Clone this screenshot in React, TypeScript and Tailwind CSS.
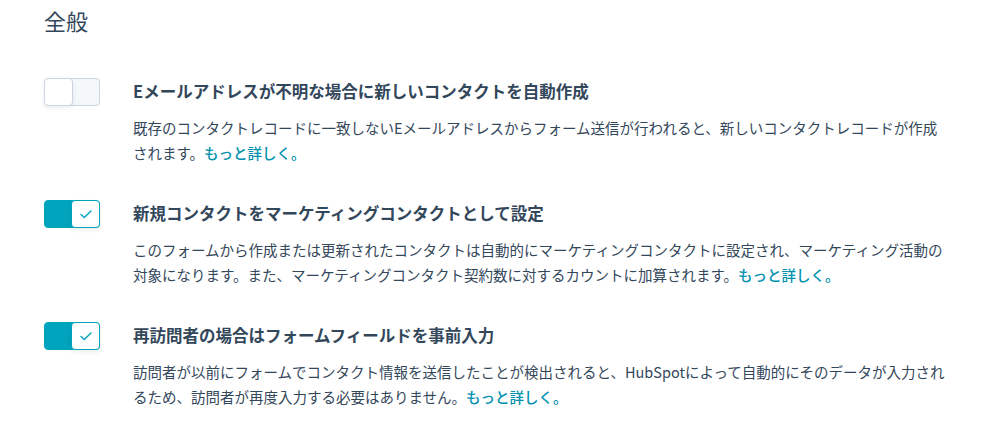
import React, { useState } from "react";

const FONT = { fontFamily: '"Noto Sans CJK JP", "Noto Sans", sans-serif' };

interface SettingProps {
  title: string;
  lines: string[];
  enabled: boolean;
}

const Toggle: React.FC<{ on: boolean; onClick: () => void }> = ({ on, onClick }) => (
  <button
    type="button"
    onClick={onClick}
    className={`relative flex h-[28px] w-[56px] shrink-0 rounded-[4px] border ${
      on ? "border-[#00a4bd] bg-[#00a4bd]" : "border-[#cbd6e2] bg-[#f5f8fa]"
    }`}
  >
    <span
      className={`absolute top-[-1px] flex h-[28px] w-[29px] items-center justify-center rounded-[4px] border bg-white shadow-[0_2px_5px_rgba(0,0,0,0.07)] ${
        on ? "left-[26px] border-[#00a4bd]" : "left-[-1px] border-[#cbd6e2]"
      }`}
    >
      {on && (
        <svg width="12" height="9" viewBox="0 0 12 9" fill="none">
          <path d="M1 4.5 L4.3 7.6 L11 1" stroke="#00a4bd" strokeWidth="1.4" strokeLinecap="round" strokeLinejoin="round" />
        </svg>
      )}
    </span>
  </button>
);

const Setting: React.FC<SettingProps> = ({ title, lines, enabled }) => {
  const [on, setOn] = useState(enabled);
  return (
    <div className="flex">
      <div className="mt-[-1px]">
        <Toggle on={on} onClick={() => setOn(!on)} />
      </div>
      <div className="ml-[33px]">
        <h3 className="text-[16.5px] font-bold leading-[24px] text-[#33475b]">{title}</h3>
        <p className="mt-[13px] text-[14.5px] leading-[24.5px] text-[#33475b]">
          {lines.map((line, i) => (
            <React.Fragment key={i}>
              {line}
              {i < lines.length - 1 ? <br /> : null}
            </React.Fragment>
          ))}
          <a href="#" className="font-medium text-[#0091ae]">もっと詳しく。</a>
        </p>
      </div>
    </div>
  );
};

const settings: SettingProps[] = [
  {
    title: "Eメールアドレスが不明な場合に新しいコンタクトを自動作成",
    lines: [
      "既存のコンタクトレコードに一致しないEメールアドレスからフォーム送信が行われると、新しいコンタクトレコードが作成",
      "されます。",
    ],
    enabled: false,
  },
  {
    title: "新規コンタクトをマーケティングコンタクトとして設定",
    lines: [
      "このフォームから作成または更新されたコンタクトは自動的にマーケティングコンタクトに設定され、マーケティング活動の",
      "対象になります。また、マーケティングコンタクト契約数に対するカウントに加算されます。",
    ],
    enabled: true,
  },
  {
    title: "再訪問者の場合はフォームフィールドを事前入力",
    lines: [
      "訪問者が以前にフォームでコンタクト情報を送信したことが検出されると、HubSpotによって自動的にそのデータが入力され",
      "るため、訪問者が再度入力する必要はありません。",
    ],
    enabled: true,
  },
];

export default function App() {
  return (
    <div className="h-[426px] w-[1000px] overflow-hidden bg-white px-[44px] pt-[5px]" style={FONT}>
      <h2 className="text-[22px] font-normal leading-[30px] text-[#33475b]">全般</h2>
      <div className="mt-[44px] flex flex-col gap-[36px]">
        {settings.map((s) => (
          <Setting key={s.title} {...s} />
        ))}
      </div>
    </div>
  );
}
